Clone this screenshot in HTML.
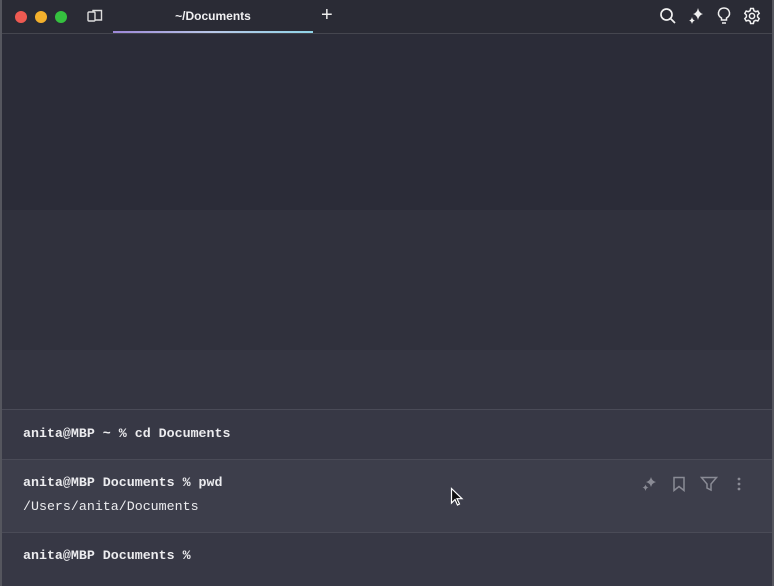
<!DOCTYPE html>
<html><head><meta charset="utf-8"><style>
*{margin:0;padding:0;box-sizing:border-box}
body{width:774px;height:586px;overflow:hidden;background:#2b2c37;font-family:"Liberation Sans",sans-serif;position:relative}
.r{position:absolute;left:0;right:0}
.t{position:absolute;font-family:"Liberation Mono",monospace;font-size:13.3px;font-weight:bold;color:#ececef;white-space:pre}
.line{position:absolute;left:0;right:0;height:1px;background:#4a4b57}
</style></head><body>
<div class="r" style="top:0;height:33px;background:#2a2b35"></div>
<div class="line" style="top:33px;background:#45464f"></div>
<div class="r" style="top:34px;height:176px;background:#2b2c38"></div>
<div class="r" style="top:210px;height:140px;background:#30313d"></div>
<div class="r" style="top:350px;height:60px;background:#343541"></div>
<div class="r" style="top:410px;height:50px;background:#373845"></div>
<div class="r" style="top:460px;height:72px;background:#3d3e4b"></div>
<div class="r" style="top:532px;height:54px;background:#373845"></div>
<div class="line" style="top:409px"></div>
<div class="line" style="top:459px"></div>
<div class="line" style="top:532px"></div>
<div style="position:absolute;left:0;top:0;width:2px;height:586px;background:#55565e"></div>
<div style="position:absolute;right:0;top:0;width:2px;height:586px;background:#55565e"></div>
<!-- traffic lights -->
<div style="position:absolute;left:15px;top:11px;width:12px;height:12px;border-radius:50%;background:#ee5a52"></div>
<div style="position:absolute;left:35px;top:11px;width:12px;height:12px;border-radius:50%;background:#f3b02c"></div>
<div style="position:absolute;left:55px;top:11px;width:12px;height:12px;border-radius:50%;background:#35c13f"></div>
<svg style="position:absolute;left:87px;top:9px" width="16" height="14" viewBox="0 0 16 14" fill="none" stroke="#ddd" stroke-width="1.4"><rect x="1" y="3" width="7" height="9" rx="1"/><path d="M6 3V1.5h8.5V11H8"/></svg>
<div style="position:absolute;left:113px;top:9px;width:200px;text-align:center;color:#f0f0f2;font-size:12px;font-weight:bold">~/Documents</div>
<div style="position:absolute;left:113px;top:31px;width:200px;height:2px;background:linear-gradient(90deg,#9d87d8,#b8c8e8,#8fd4e8)"></div>
<div style="position:absolute;left:321px;top:4px;color:#eee;font-size:20px;font-weight:300">+</div>
<svg style="position:absolute;left:659px;top:7px" width="18" height="18" viewBox="0 0 18 18" fill="none" stroke="#f0f0f0" stroke-width="1.7"><circle cx="7.5" cy="7.5" r="5.5"/><path d="M11.5 11.5L16 16"/></svg>
<svg style="position:absolute;left:687px;top:7px" width="18" height="18" viewBox="0 0 18 18" fill="#f0f0f0"><path d="M11 1Q12 6 16 7Q12 8 11 13Q10 8 6 7Q10 6 11 1Z"/><path d="M5 10Q5.6 13 8 13.5Q5.6 14 5 17Q4.4 14 2 13.5Q4.4 13 5 10Z"/></svg>
<svg style="position:absolute;left:717px;top:7px" width="14" height="18" viewBox="0 0 14 18" fill="none" stroke="#f0f0f0" stroke-width="1.5"><path d="M4.5 13V11Q1 9 1.5 5.5Q2.5 1 7 1Q11.5 1 12.5 5.5Q13 9 9.5 11V13Z"/><path d="M5 16h4"/></svg>
<svg style="position:absolute;left:743px;top:7px" width="18" height="18" viewBox="0 0 18 18" fill="none" stroke="#f0f0f0" stroke-width="1.5"><circle cx="9" cy="9" r="2.6"/><path d="M7.6 1.5h2.8l.5 2.2 1.8 1 2.1-.7 1.4 2.4-1.6 1.6v2l1.6 1.6-1.4 2.4-2.1-.7-1.8 1-.5 2.2H7.6l-.5-2.2-1.8-1-2.1.7-1.4-2.4 1.6-1.6v-2L1.8 6.4l1.4-2.4 2.1.7 1.8-1z"/></svg>
<div class="t" style="left:23px;top:426px">anita@MBP ~ % cd Documents</div>
<div class="t" style="left:23px;top:475px">anita@MBP Documents % pwd</div>
<div class="t" style="left:23px;top:499px;font-weight:normal">/Users/anita/Documents</div>
<div class="t" style="left:23px;top:548px">anita@MBP Documents %</div>
<svg style="position:absolute;left:641px;top:476px" width="16" height="16" viewBox="0 0 16 16" fill="#8a8b95"><path d="M10 1Q11 5 15 6Q11 7 10 11Q9 7 5 6Q9 5 10 1Z"/><path d="M4.5 8.5Q5 11 7.5 11.5Q5 12 4.5 15Q4 12 1.5 11.5Q4 11 4.5 8.5Z"/></svg>
<svg style="position:absolute;left:672px;top:476px" width="14" height="16" viewBox="0 0 14 16" fill="none" stroke="#8a8b95" stroke-width="1.5"><path d="M2 1.5h10V14.5L7 10.5 2 14.5Z"/></svg>
<svg style="position:absolute;left:700px;top:476px" width="18" height="16" viewBox="0 0 18 16" fill="none" stroke="#8a8b95" stroke-width="1.5"><path d="M1.5 1.5h15L11 8v6l-4-2V8Z"/></svg>
<svg style="position:absolute;left:735px;top:476px" width="8" height="16" viewBox="0 0 8 16" fill="#8a8b95"><circle cx="4" cy="3" r="1.4"/><circle cx="4" cy="8" r="1.4"/><circle cx="4" cy="13" r="1.4"/></svg>
<svg style="position:absolute;left:450px;top:487px" width="14" height="20" viewBox="0 0 14 20"><path d="M1.5 1.5V16l3.5-3.5 2.5 5.5 2-1-2.5-5.3h5Z" fill="#111" stroke="#fff" stroke-width="1.2"/></svg>
</body></html>
